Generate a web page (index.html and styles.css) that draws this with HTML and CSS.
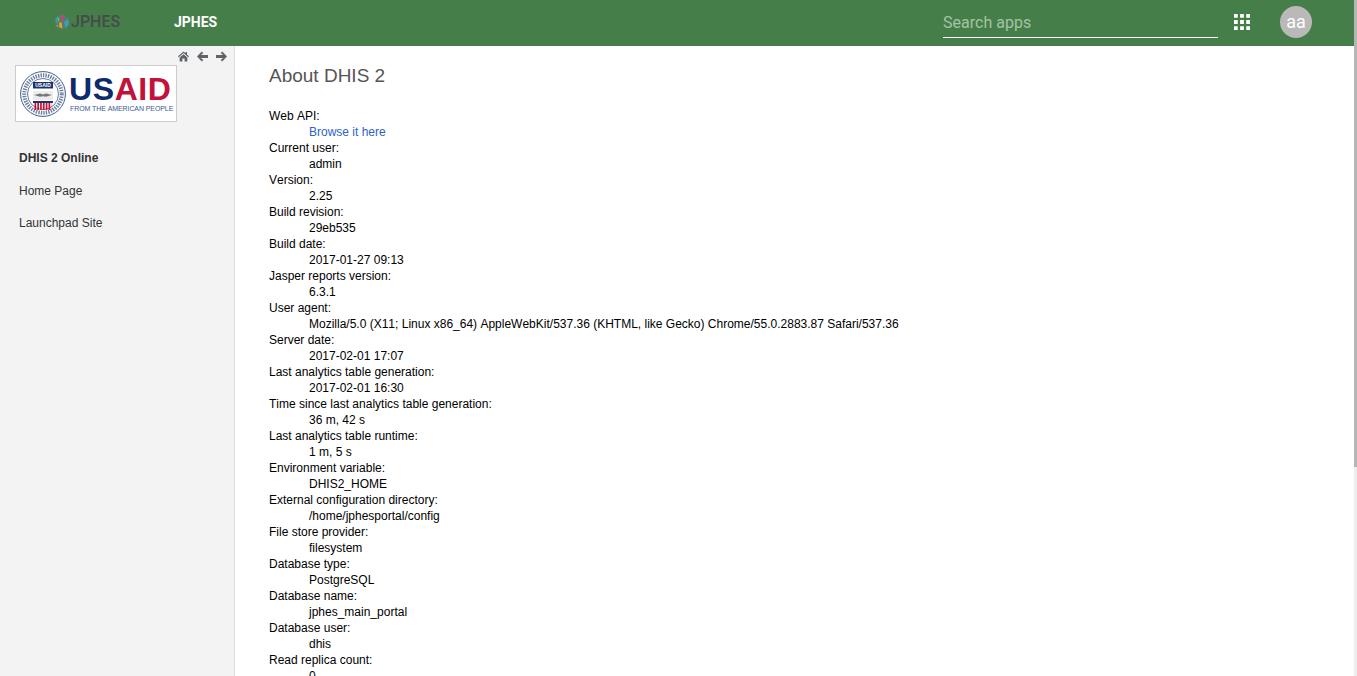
FILE: index.html
```html
<!DOCTYPE html>
<html lang="en">
<head>
<meta charset="utf-8">
<title>About DHIS 2</title>
<link rel="stylesheet" href="styles.css">
</head>
<body>
<div class="page">
<header class="topbar">
  <div class="brand">
    <svg class="brand-mark" viewBox="0 0 16 16" aria-hidden="true">
      <circle cx="8" cy="8" r="7.500" fill="#4f7f6a"/>
      <path d="M1 5l3-3 1 5-2 3z" fill="#2f9f9c"/>
      <path d="M6 1l3 1 1.500 5-2.500 1z" fill="#c8427c"/>
      <path d="M5 9l2.500-1 1 6-3-.5z" fill="#e0a52c"/>
      <path d="M10 8l4-3 1 5-3.500 4z" fill="#3a9fb5"/>
      <path d="M1.500 11l2.500 0 .5 3z" fill="#c58a33"/>
      <path d="M3.500 3l2 2-1 3z" fill="#8cbf3f"/>
    </svg>
    <span class="brand-word">JPHES</span>
  </div>
  <div class="title">JPHES</div>
  <div class="search">Search apps</div>
  <svg class="apps" viewBox="0 0 17 17" aria-hidden="true">
    <path fill="#fff" d="M0 0h4v4H0zM6.500 0h4v4h-4zM13 0h4v4h-4zM0 6.500h4v4H0zM6.500 6.500h4v4h-4zM13 6.500h4v4h-4zM0 13h4v4H0zM6.500 13h4v4h-4zM13 13h4v4h-4z"/>
  </svg>
  <div class="avatar">aa</div>
</header>
<div class="layout">
  <aside class="sidebar">
    <div class="nav-icons">
      <svg class="nav-icon" viewBox="0 0 12 11" aria-hidden="true"><path d="M6 0L0 5.200l.8 1L6 1.800l5.200 4.400.8-1L9.800 3.300V.6H8.200v1.300zM1.800 6.600V11h3V7.800h2.400V11h3V6.600L6 3z"/></svg>
      <svg class="nav-icon" viewBox="0 0 12 12" aria-hidden="true"><path d="M5.200.6l1.700 1.700-2.600 2H12v3.400H4.300l2.600 2-1.700 1.700L0 6z"/></svg>
      <svg class="nav-icon" viewBox="0 0 12 12" aria-hidden="true"><path d="M6.800.6L5.100 2.300l2.600 2H0v3.400h7.700l-2.600 2 1.700 1.700L12 6z"/></svg>
    </div>
    <div class="logo">
      <svg class="seal" viewBox="0 0 46 46" aria-hidden="true">
        <circle cx="23" cy="23" r="22.400" fill="#fff" stroke="#3d5a8c" stroke-width="1"/>
        <circle cx="23" cy="23" r="18.700" fill="none" stroke="#6d7fa3" stroke-width="4" stroke-dasharray="1.400 1.100"/>
        <circle cx="23" cy="23" r="15.500" fill="#fff" stroke="#3d5a8c" stroke-width=".8"/>
        <path d="M13 11h20v6.500H13z" fill="#1b3470"/>
        <text class="seal-text" x="23" y="16">USAID</text>
        <path d="M13 20h20v9H13z" fill="#ececec"/>
        <path d="M14 24l6-1.500 3 1 3-1 6 1.500-6 1.800-3-.5-3 .5z" fill="#777"/>
        <path d="M13 30h20v2H13z" fill="#1b3470"/>
        <path d="M14.500 35.500H31.500" stroke="#c8102e" stroke-width="7" stroke-dasharray="1.700 1.100"/>
      </svg>
      <div class="wordmark">
        <div class="usaid"><span class="us">US</span><span class="aid">AID</span></div>
        <div class="tag">FROM THE AMERICAN PEOPLE</div>
      </div>
    </div>
    <nav class="menu">
      <a class="menu-head">DHIS 2 Online</a>
      <a class="menu-item">Home Page</a>
      <a class="menu-item">Launchpad Site</a>
    </nav>
  </aside>
  <main class="content">
    <h3 class="heading">About DHIS 2</h3>
    <dl class="facts">
      <dt>Web API:</dt><dd><a class="link">Browse it here</a></dd>
      <dt>Current user:</dt><dd>admin</dd>
      <dt>Version:</dt><dd>2.25</dd>
      <dt>Build revision:</dt><dd>29eb535</dd>
      <dt>Build date:</dt><dd>2017-01-27 09:13</dd>
      <dt>Jasper reports version:</dt><dd>6.3.1</dd>
      <dt>User agent:</dt><dd>Mozilla/5.0 (X11; Linux x86_64) AppleWebKit/537.36 (KHTML, like Gecko) Chrome/55.0.2883.87 Safari/537.36</dd>
      <dt>Server date:</dt><dd>2017-02-01 17:07</dd>
      <dt>Last analytics table generation:</dt><dd>2017-02-01 16:30</dd>
      <dt>Time since last analytics table generation:</dt><dd>36 m, 42 s</dd>
      <dt>Last analytics table runtime:</dt><dd>1 m, 5 s</dd>
      <dt>Environment variable:</dt><dd>DHIS2_HOME</dd>
      <dt>External configuration directory:</dt><dd>/home/jphesportal/config</dd>
      <dt>File store provider:</dt><dd>filesystem</dd>
      <dt>Database type:</dt><dd>PostgreSQL</dd>
      <dt>Database name:</dt><dd>jphes_main_portal</dd>
      <dt>Database user:</dt><dd>dhis</dd>
      <dt>Read replica count:</dt><dd>0</dd>
    </dl>
  </main>
</div>
</div>
<div class="scrolltrack"><div class="scrollthumb"></div></div>
</body>
</html>
```
FILE: styles.css
```css
* { box-sizing: border-box; }
html, body { margin: 0; height: 676px; overflow: hidden; background: #fff; }
body {
  display: flex;
  font-family: "Liberation Sans", Arial, sans-serif;
  font-size: 12px;
  font-kerning: none;
  color: #000;
}
.page { flex: 1; min-width: 0; }

.topbar {
  height: 46px;
  background: #467e4a;
  display: flex;
  align-items: center;
  padding-left: 54px;
  padding-right: 42px;
}
.brand { width: 120px; flex: none; display: flex; align-items: center; margin-top: -3px; }
.brand-mark { width: 16px; height: 16px; flex: none; filter: blur(0.4px); }
.brand-word { font-family: Roboto, sans-serif; font-weight: 500; font-size: 16px; color: #474a4a; margin-left: 1px; }
.title { font-family: Roboto, sans-serif; font-weight: 700; font-size: 14px; color: #fff; width: 769px; flex: none; margin-top: -2px; }
.search {
  width: 275px;
  height: 30px;
  flex: none;
  border-bottom: 1px solid #fff;
  color: #a3c4a6;
  font-family: Roboto, sans-serif;
  font-size: 16px;
  line-height: 30px;
}
.apps { width: 16px; height: 16px; margin-left: 16px; margin-right: 1px; flex: none; margin-top: -2px; }
.avatar {
  width: 32px;
  height: 32px;
  margin-left: 29px;
  border-radius: 50%;
  background: #b9b9b9;
  color: #fff;
  font-family: Roboto, sans-serif;
  font-size: 18px;
  line-height: 32px;
  text-align: center;
  flex: none;
  margin-top: -2px;
}

.layout { display: flex; height: 630px; }
.sidebar {
  width: 235px;
  flex: none;
  background: #f3f3f3;
  border-right: 1px solid #ddd;
  padding: 3px 0 0 15px;
}
.nav-icons { display: flex; justify-content: flex-end; align-items: center; gap: 8px; height: 15px; padding-right: 7px; }
.nav-icon { width: 11px; height: 11px; fill: #5f6469; flex: none; }
.logo {
  width: 162px;
  height: 57px;
  margin-top: 1px;
  background: #fff;
  border: 1px solid #ccc;
  display: flex;
  align-items: center;
  padding-left: 4px;
  gap: 3px;
}
.seal { width: 46px; height: 46px; flex: none; }
.seal-text { font-family: "Liberation Sans", sans-serif; font-weight: 700; font-size: 5px; fill: #fff; text-anchor: middle; }
.wordmark { display: flex; flex-direction: column; }
.usaid { font-family: "Liberation Sans", sans-serif; font-weight: 700; font-size: 32px; line-height: 30px; letter-spacing: 0.6px; }
.us { color: #0f2a6b; }
.aid { color: #c2113a; }
.tag { font-size: 7px; line-height: 10px; color: #3d5a94; white-space: nowrap; letter-spacing: -0.09px; margin-left: 1px; }

.menu { display: flex; flex-direction: column; padding: 28px 0 0 4px; color: #333; }
.menu-head { font-weight: 700; line-height: 16px; height: 33px; }
.menu-item { line-height: 16px; height: 32px; }
.menu-item:first-of-type { height: 33px; }

.content { flex: 1; padding: 0 0 0 34px; overflow: hidden; }
.heading { margin: 19px 0 0; font-size: 19px; font-weight: 400; line-height: 22px; color: #555; }
.facts { margin: 21px 0 0; line-height: 16px; }
.facts dt { font-weight: 400; }
.facts dd { margin: 0 0 0 40px; }
.link { color: #3162c5; }

.scrolltrack { width: 3px; flex: none; height: 676px; background: #eee; }
.scrollthumb { height: 467px; background: #b5b5b5; }
```
